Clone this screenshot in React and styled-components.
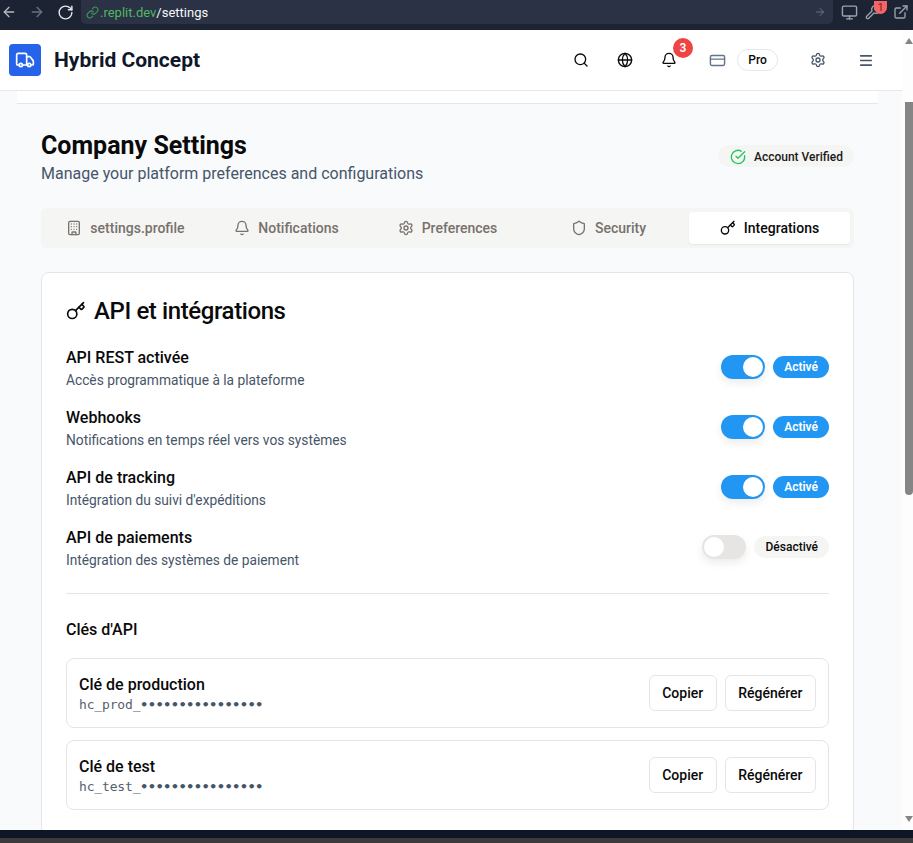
import React from 'react';
import styled, { createGlobalStyle } from 'styled-components';
import {
  ArrowLeft, ArrowRight, Bell, Building, CircleCheckBig, CreditCard, ExternalLink, Globe,
  Key, Link as LinkIcon, Menu, Monitor, RotateCw, Search, Settings, Shield, Truck, Wrench,
} from 'lucide-react';

const GlobalStyle = createGlobalStyle`
  html, body { margin: 0; padding: 0; height: 100%; overflow: hidden; }
  body { font-family: Roboto, "Noto Sans", sans-serif; color: #0a0a0a; }
  * { box-sizing: border-box; }
`;

const tabs = [
  { label: 'settings.profile', icon: Building },
  { label: 'Notifications', icon: Bell },
  { label: 'Preferences', icon: Settings },
  { label: 'Security', icon: Shield },
  { label: 'Integrations', icon: Key, active: true },
];

const toggles = [
  { title: 'API REST activée', text: 'Accès programmatique à la plateforme', on: true },
  { title: 'Webhooks', text: 'Notifications en temps réel vers vos systèmes', on: true },
  { title: 'API de tracking', text: "Intégration du suivi d'expéditions", on: true },
  { title: 'API de paiements', text: 'Intégration des systèmes de paiement', on: false },
];

const apiKeys = [
  { title: 'Clé de production', prefix: 'hc_prod_' },
  { title: 'Clé de test', prefix: 'hc_test_' },
];

export default function App() {
  return (
    <Screen>
      <GlobalStyle />
      <BrowserBar>
        <NavIcon $w={18}><ArrowLeft size={16} /></NavIcon>
        <NavIcon $w={38} $dim><ArrowRight size={16} /></NavIcon>
        <NavIcon $w={18} $bright><RotateCw size={17} /></NavIcon>
        <AddressBar>
          <LinkIcon size={13} color="#3f9a55" />
          <Url><Green>.replit.dev</Green>/settings</Url>
          <ArrowRight size={12} color="#6b7280" />
        </AddressBar>
        <BarTools>
          <Monitor size={17} />
          <WrenchWrap>
            <Wrench size={16} />
            <WrenchBadge>1</WrenchBadge>
          </WrenchWrap>
          <ExternalLink size={16} />
        </BarTools>
      </BrowserBar>

      <Viewport>
        <Page>
          <Header>
            <Brand>
              <LogoBox><Truck size={20} /></LogoBox>
              <BrandName>Hybrid Concept</BrandName>
            </Brand>
            <HeaderTools>
              <HeaderIcon $w={44}><Search size={16} /></HeaderIcon>
              <HeaderIcon $w={44}><Globe size={16} /></HeaderIcon>
              <HeaderIcon $w={44}>
                <Bell size={16} />
                <BellBadge>3</BellBadge>
              </HeaderIcon>
              <CardIcon><CreditCard size={17} /></CardIcon>
              <PlanPill>Pro</PlanPill>
              <HeaderIcon $w={80} $muted><Settings size={16} /></HeaderIcon>
              <HeaderIcon $w={16} $muted><Menu size={17} strokeWidth={2.4} /></HeaderIcon>
            </HeaderTools>
          </Header>

          <Strip />

          <Content>
            <TitleRow>
              <div>
                <PageTitle>Company Settings</PageTitle>
                <PageSub>Manage your platform preferences and configurations</PageSub>
              </div>
              <VerifiedPill>
                <CircleCheckBig size={16} color="#22c55e" />
                Account Verified
              </VerifiedPill>
            </TitleRow>

            <TabList>
              {tabs.map(({ label, icon: Icon, active }) => (
                <Tab key={label} $active={active}>
                  <Icon size={16} />
                  {label}
                </Tab>
              ))}
            </TabList>

            <Card>
              <CardTitle><Key size={20} />API et intégrations</CardTitle>

              <ToggleList>
                {toggles.map((t) => (
                  <ToggleRow key={t.title}>
                    <div>
                      <RowTitle>{t.title}</RowTitle>
                      <RowText>{t.text}</RowText>
                    </div>
                    <ToggleSide>
                      <Switch $on={t.on}><Knob $on={t.on} /></Switch>
                      <StateBadge $on={t.on}>{t.on ? 'Activé' : 'Désactivé'}</StateBadge>
                    </ToggleSide>
                  </ToggleRow>
                ))}
              </ToggleList>

              <Divider />

              <KeysTitle>Clés d'API</KeysTitle>
              <KeyList>
                {apiKeys.map((k) => (
                  <KeyCard key={k.title}>
                    <div>
                      <RowTitle>{k.title}</RowTitle>
                      <KeyValue>{k.prefix}<Dots>••••••••••••••••</Dots></KeyValue>
                    </div>
                    <KeyActions>
                      <OutlineButton>Copier</OutlineButton>
                      <OutlineButton>Régénérer</OutlineButton>
                    </KeyActions>
                  </KeyCard>
                ))}
              </KeyList>
            </Card>
          </Content>
        </Page>

        <Scrollbar>
          <ArrowUp />
          <ThumbTrack><Thumb /></ThumbTrack>
          <ArrowDown />
        </Scrollbar>
      </Viewport>

      <BottomBar />
      <BottomEdge />
    </Screen>
  );
}

const Screen = styled.div`
  width: 913px;
  height: 843px;
  display: flex;
  flex-direction: column;
  overflow: hidden;
  background: #3b3b3b;
`;

const BrowserBar = styled.div`
  height: 30px;
  flex: none;
  display: flex;
  align-items: flex-start;
  background: #1c2333;
  color: #b4b8bf;
`;

const NavIcon = styled.span`
  width: ${(p) => p.$w}px;
  height: 24px;
  display: flex;
  align-items: center;
  justify-content: center;
  color: ${(p) => (p.$dim ? '#6b7280' : p.$bright ? '#e5e7eb' : '#b4b8bf')};
`;

const AddressBar = styled.div`
  width: 752px;
  height: 24px;
  margin-left: 7px;
  padding: 0 7px 0 5px;
  display: flex;
  align-items: center;
  gap: 1px;
  background: #2b3245;
  border-radius: 0 0 5px 5px;
`;

const Url = styled.div`
  flex: 1;
  font-size: 13px;
  color: #f5f9fc;
`;

const Green = styled.span`
  color: #4fb862;
`;

const BarTools = styled.div`
  flex: 1;
  height: 24px;
  padding-left: 8px;
  display: flex;
  align-items: center;
  color: #9ca3af;
`;

const WrenchWrap = styled.span`
  position: relative;
  display: flex;
  margin: 0 12px 0 7px;
`;

const WrenchBadge = styled.span`
  position: absolute;
  top: -3px;
  left: 9px;
  width: 13px;
  height: 13px;
  border-radius: 0 0 7px 7px;
  background: #f56565;
  color: #7f1d1d;
  font-size: 11px;
  line-height: 13px;
  text-align: center;
`;

const Viewport = styled.div`
  flex: 1;
  min-height: 0;
  display: flex;
`;

const Page = styled.div`
  flex: 1;
  min-width: 0;
  overflow: hidden;
  background: #f8fafc;
`;

const Header = styled.header`
  height: 61px;
  padding: 0 28px 0 9px;
  display: flex;
  align-items: center;
  justify-content: space-between;
  background: #fff;
  border-bottom: 1px solid #e5e7eb;
`;

const Brand = styled.div`
  display: flex;
  align-items: center;
  gap: 13px;
`;

const LogoBox = styled.div`
  width: 32px;
  height: 32px;
  display: flex;
  align-items: center;
  justify-content: center;
  border-radius: 4px;
  background: #2563eb;
  color: #fff;
`;

const BrandName = styled.div`
  font-size: 21px;
  font-weight: 700;
  color: #0f172a;
`;

const HeaderTools = styled.div`
  display: flex;
  align-items: center;
`;

const HeaderIcon = styled.span`
  position: relative;
  width: ${(p) => p.$w}px;
  height: 24px;
  display: flex;
  align-items: center;
  justify-content: center;
  color: ${(p) => (p.$muted ? '#475569' : '#0a0a0a')};
`;

const CardIcon = styled.span`
  width: 40px;
  margin-left: 6px;
  display: flex;
  justify-content: center;
  color: #64748b;
`;

const BellBadge = styled.span`
  position: absolute;
  top: -10px;
  left: 26px;
  width: 20px;
  height: 20px;
  border-radius: 50%;
  background: #ef4444;
  color: #fff;
  font-size: 12px;
  font-weight: 600;
  line-height: 20px;
  text-align: center;
`;

const PlanPill = styled.span`
  width: 41px;
  height: 22px;
  display: flex;
  align-items: center;
  justify-content: center;
  border: 1px solid #e5e7eb;
  border-radius: 11px;
  background: #fff;
  font-size: 12px;
  font-weight: 500;
`;

const Strip = styled.div`
  height: 13px;
  margin: 0 24px 0 17px;
  background: #fff;
  border-bottom: 1px solid #e5e7eb;
`;

const Content = styled.main`
  padding: 26px 48px 0 41px;
`;

const TitleRow = styled.div`
  display: flex;
  align-items: flex-start;
  justify-content: space-between;
`;

const PageTitle = styled.h1`
  margin: 0;
  font-size: 25px;
  line-height: 32px;
  font-weight: 700;
  color: #0a0a0a;
`;

const PageSub = styled.p`
  margin: 0;
  font-size: 16px;
  line-height: 23px;
  color: #475569;
`;

const VerifiedPill = styled.div`
  margin-top: 15px;
  height: 22px;
  padding: 1px 11px 0 12px;
  display: flex;
  align-items: center;
  gap: 8px;
  border-radius: 11px;
  background: #f5f5f4;
  font-size: 12px;
  font-weight: 500;
  color: #1c1917;
`;

const TabList = styled.div`
  margin-top: 23px;
  height: 40px;
  padding: 4px;
  display: grid;
  grid-template-columns: repeat(5, 1fr);
  border-radius: 6px;
  background: #f5f5f4;
`;

const Tab = styled.div`
  display: flex;
  align-items: center;
  justify-content: center;
  gap: 8px;
  border-radius: 4px;
  font-size: 14px;
  font-weight: 500;
  color: ${(p) => (p.$active ? '#0a0a0a' : '#78716c')};
  background: ${(p) => (p.$active ? '#fff' : 'transparent')};
  box-shadow: ${(p) => (p.$active ? '0 1px 2px rgba(0,0,0,.06)' : 'none')};
`;

const Card = styled.section`
  margin-top: 24px;
  padding: 24px;
  border: 1px solid #e7e5e4;
  border-radius: 8px;
  background: #fff;
`;

const CardTitle = styled.h2`
  margin: 0;
  height: 28px;
  display: flex;
  align-items: center;
  gap: 8px;
  font-size: 24px;
  font-weight: 500;
  letter-spacing: -0.4px;
`;

const ToggleList = styled.div`
  margin-top: 21px;
  display: flex;
  flex-direction: column;
  gap: 16px;
`;

const ToggleRow = styled.div`
  height: 44px;
  display: flex;
  align-items: center;
  justify-content: space-between;
`;

const RowTitle = styled.div`
  font-size: 16px;
  line-height: 24px;
  font-weight: 500;
  color: #0a0a0a;
`;

const RowText = styled.div`
  font-size: 13.75px;
  line-height: 20px;
  color: #475569;
`;

const ToggleSide = styled.div`
  margin-bottom: 2px;
  display: flex;
  align-items: center;
  gap: 8px;
`;

const Switch = styled.span`
  width: 44px;
  height: 24px;
  padding: 2px;
  display: flex;
  justify-content: ${(p) => (p.$on ? 'flex-end' : 'flex-start')};
  border-radius: 12px;
  background: ${(p) => (p.$on ? '#2196f3' : '#e7e5e4')};
  box-shadow: 0 4px 8px rgba(0, 0, 0, 0.08);
`;

const Knob = styled.span`
  width: 20px;
  height: 20px;
  border-radius: 50%;
  background: #fff;
`;

const StateBadge = styled.span`
  height: 22px;
  padding: 0 11px;
  display: flex;
  align-items: center;
  border-radius: 11px;
  font-size: 12px;
  font-weight: ${(p) => (p.$on ? 600 : 500)};
  color: ${(p) => (p.$on ? '#fff' : '#0a0a0a')};
  background: ${(p) => (p.$on ? '#2196f3' : '#f5f5f4')};
`;

const Divider = styled.hr`
  margin: 23px 0 24px;
  border: 0;
  border-top: 1px solid #e7e5e4;
`;

const KeysTitle = styled.h3`
  margin: 0;
  font-size: 16px;
  line-height: 24px;
  font-weight: 500;
`;

const KeyList = styled.div`
  margin-top: 16px;
  display: flex;
  flex-direction: column;
  gap: 12px;
`;

const KeyCard = styled.div`
  height: 70px;
  padding: 0 12px;
  display: flex;
  align-items: center;
  justify-content: space-between;
  border: 1px solid #e7e5e4;
  border-radius: 8px;
`;

const KeyValue = styled.div`
  font: 13px/16px "DejaVu Sans Mono", monospace;
  letter-spacing: -0.16px;
  color: #57606e;
`;

const Dots = styled.span`
  font-weight: 700;
  color: #475569;
`;

const KeyActions = styled.div`
  display: flex;
  gap: 8px;
`;

const OutlineButton = styled.button`
  height: 36px;
  padding: 0 12.5px;
  border: 1px solid #e7e5e4;
  border-radius: 6px;
  background: #fff;
  font: 500 14px Roboto, sans-serif;
  color: #0a0a0a;
`;

const Scrollbar = styled.div`
  width: 11px;
  flex: none;
  display: flex;
  flex-direction: column;
  align-items: flex-end;
  background: #fdfdfd;
`;

const ArrowUp = styled.span`
  margin-top: 8px;
  width: 0;
  height: 0;
  border: 4px solid transparent;
  border-top: 0;
  border-bottom: 6px solid #858585;
`;

const ThumbTrack = styled.div`
  flex: 1;
`;

const Thumb = styled.div`
  width: 8px;
  height: 393px;
  margin-top: 58px;
  border-radius: 0 0 4px 4px;
  background: #858585;
`;

const ArrowDown = styled.span`
  margin-bottom: 8px;
  width: 0;
  height: 0;
  border: 4px solid transparent;
  border-bottom: 0;
  border-top: 6px solid #858585;
`;

const BottomBar = styled.div`
  height: 8px;
  flex: none;
  background: #0e1525;
`;

const BottomEdge = styled.div`
  height: 5px;
  flex: none;
  background: #3b3b3b;
`;
